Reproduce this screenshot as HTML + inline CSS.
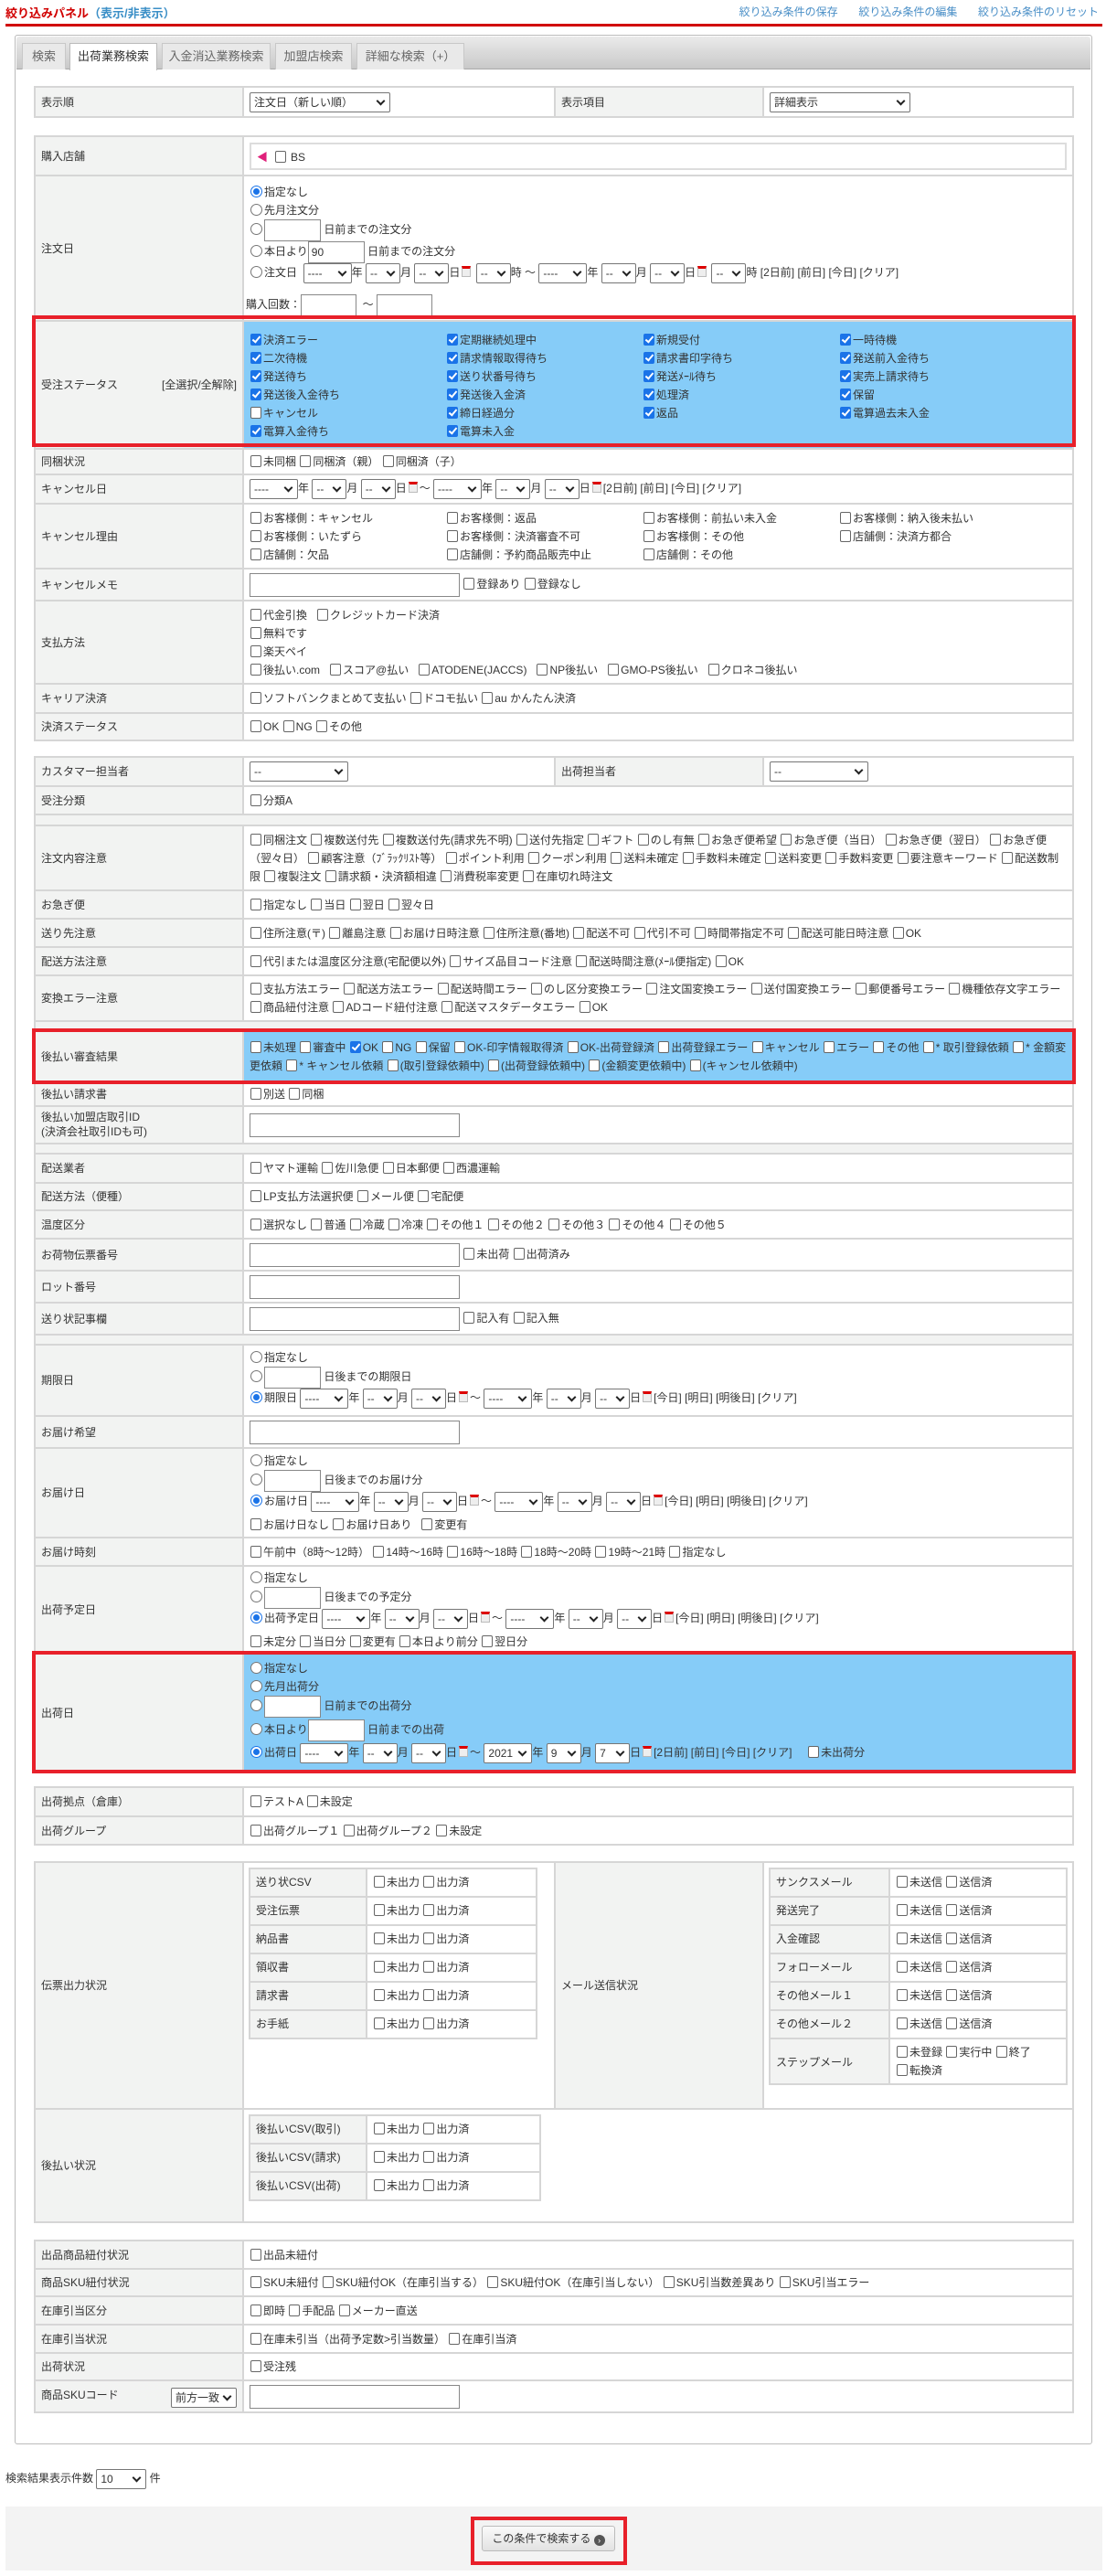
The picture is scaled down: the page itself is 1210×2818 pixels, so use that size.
<!DOCTYPE html>
<html><head><meta charset="utf-8">
<style>
*{box-sizing:border-box}
body{margin:0;width:1210px;height:2818px;position:relative;background:#fff;font-family:"Liberation Sans","Noto Sans CJK JP",sans-serif;font-size:12px;color:#333;overflow:hidden}
.abs{position:absolute}
table{border-collapse:collapse;table-layout:fixed;position:absolute;left:37px;width:1138px}
td{border:2px solid #d6d6d6;padding:2px 6px;vertical-align:middle;line-height:20px}
td.l{background:#f2f3f2;width:228px}
td.b{background:#86ccf8}
tr.sp td{background:#f2f3f2;padding:0}
.cb{display:inline-block;width:12px;height:13px;border:1px solid #666;border-radius:2px;background:#fff;vertical-align:-2px;margin:0 2px 0 1px;position:relative}
.cb.c{background:#1a73e8;border-color:#1a73e8}
.cb.c:after{content:"";position:absolute;left:3px;top:0px;width:3px;height:7px;border:solid #fff;border-width:0 2px 2px 0;transform:rotate(40deg)}
.rd{display:inline-block;width:13px;height:13px;border:1px solid #777;border-radius:50%;background:#fff;vertical-align:-2px;margin:0 2px 0 1px;position:relative}
.rd.c{border:1px solid #1a73e8}
.rd.c:after{content:"";position:absolute;left:2px;top:2px;width:7px;height:7px;border-radius:50%;background:#1a73e8}
.s{display:inline-block;height:22px;border:1px solid #767676;border-radius:2px;background:#fff;vertical-align:middle;line-height:20px;padding-left:4px;position:relative;font-size:12px}
.s:after{content:"";position:absolute;right:6px;top:5px;width:5px;height:5px;border:solid #222;border-width:0 2px 2px 0;transform:rotate(45deg)}
.y{width:53px}.m{width:38px}
.in{display:inline-block;height:24px;border:1px solid #888;background:#fff;vertical-align:middle;line-height:22px;padding-left:3px}
.cal{display:inline-block;width:10px;height:12px;border:1px solid #bbb;border-top:3px solid #d00;background:#eee;vertical-align:-1px;margin:0 2px}
.ln{height:20px;white-space:nowrap}
.g4 span.i{display:inline-block;width:215px;height:20px}
.red{position:absolute;border:4px solid #e8202a;pointer-events:none}
.inner{position:static;width:100%;border-collapse:collapse}
.inner td{border:2px solid #d6d6d6;height:31px;vertical-align:top;padding-top:4px}
</style></head><body>

<div class="abs" style="left:6px;top:4px;font-size:13px;font-weight:bold;color:#d10000">絞り込みパネル<span style="color:#3b8fc7">（表示/非表示）</span></div>
<div class="abs" style="right:8px;top:4px;font-size:12px;color:#4a8fc7;word-spacing:8px">絞り込み条件の保存 &nbsp;絞り込み条件の編集 &nbsp;絞り込み条件のリセット</div>
<div class="abs" style="left:6px;top:26px;width:1200px;height:3px;background:#d10000"></div>

<div class="abs" style="left:16px;top:38px;width:1179px;height:2636px;border:1px solid #bbb;border-radius:3px"></div>
<div class="abs" style="left:18px;top:40px;width:1175px;height:36px;background:linear-gradient(#eaeaea,#c9c9c9);border-bottom:1px solid #aaa;border-radius:3px 3px 0 0"></div>
<div class="abs" style="left:24px;top:47px;width:48px;height:29px;background:#e9e9e9;border:1px solid #c8c8c8;border-bottom:0;text-align:center;line-height:28px;color:#666;font-size:13px">検索</div>
<div class="abs" style="left:76px;top:47px;width:96px;height:30px;background:#fff;border:1px solid #bbb;border-bottom:0;text-align:center;line-height:28px;font-size:13px">出荷業務検索</div>
<div class="abs" style="left:177px;top:47px;width:119px;height:29px;background:#e9e9e9;border:1px solid #c8c8c8;border-bottom:0;text-align:center;line-height:28px;color:#666;font-size:13px">入金消込業務検索</div>
<div class="abs" style="left:301px;top:47px;width:84px;height:29px;background:#e9e9e9;border:1px solid #c8c8c8;border-bottom:0;text-align:center;line-height:28px;color:#666;font-size:13px">加盟店検索</div>
<div class="abs" style="left:390px;top:47px;width:118px;height:29px;background:#e9e9e9;border:1px solid #c8c8c8;border-bottom:0;text-align:center;line-height:28px;color:#666;font-size:13px">詳細な検索（+）</div>

<!-- table1 -->
<table style="top:94px">
<tr style="height:33px"><td class="l" style="width:228px">表示順</td><td style="width:341px"><span class="s" style="width:154px">注文日（新しい順）</span></td><td class="l" style="width:228px">表示項目</td><td><span class="s" style="width:154px">詳細表示</span></td></tr>
</table>

<!-- table2 -->
<table style="top:148px">
<tr style="height:43px"><td class="l">購入店舗</td><td><div style="border:2px solid #ddd;height:30px;padding:4px 6px"><span style="color:#e0207a">◀</span> &nbsp;<span class="cb"></span> BS</div></td></tr>
<tr style="height:156px"><td class="l">注文日</td><td style="vertical-align:top;padding-top:7px">
<div class="ln"><span class="rd c"></span>指定なし</div>
<div class="ln"><span class="rd"></span>先月注文分</div>
<div class="ln" style="height:24px"><span class="rd"></span><span class="in" style="width:62px"></span> 日前までの注文分</div>
<div class="ln" style="height:24px"><span class="rd"></span>本日より<span class="in" style="width:62px">90</span> 日前までの注文分</div>
<div class="ln" style="height:24px"><span class="rd"></span>注文日 &nbsp;<span class="s y">----</span>年 <span class="s m">--</span>月 <span class="s m">--</span>日<span class="cal"></span> <span class="s m">--</span>時 ～ <span class="s y">----</span>年 <span class="s m">--</span>月 <span class="s m">--</span>日<span class="cal"></span> <span class="s m">--</span>時 [2日前] [前日] [今日] [クリア]</div>
<div style="height:26px;margin-top:10px;margin-left:-4px">購入回数：<span class="in" style="width:61px"></span> &nbsp;～ <span class="in" style="width:61px"></span></div>
</td></tr>
<tr style="height:140px"><td class="l">受注ステータス<span style="float:right">[全選択/全解除]</span></td><td class="b g4" style="padding-top:4px">
<div><span class="i"><span class="cb c"></span>決済エラー</span><span class="i"><span class="cb c"></span>定期継続処理中</span><span class="i"><span class="cb c"></span>新規受付</span><span class="i"><span class="cb c"></span>一時待機</span></div>
<div><span class="i"><span class="cb c"></span>二次待機</span><span class="i"><span class="cb c"></span>請求情報取得待ち</span><span class="i"><span class="cb c"></span>請求書印字待ち</span><span class="i"><span class="cb c"></span>発送前入金待ち</span></div>
<div><span class="i"><span class="cb c"></span>発送待ち</span><span class="i"><span class="cb c"></span>送り状番号待ち</span><span class="i"><span class="cb c"></span>発送ﾒｰﾙ待ち</span><span class="i"><span class="cb c"></span>実売上請求待ち</span></div>
<div><span class="i"><span class="cb c"></span>発送後入金待ち</span><span class="i"><span class="cb c"></span>発送後入金済</span><span class="i"><span class="cb c"></span>処理済</span><span class="i"><span class="cb c"></span>保留</span></div>
<div><span class="i"><span class="cb"></span>キャンセル</span><span class="i"><span class="cb c"></span>締日経過分</span><span class="i"><span class="cb c"></span>返品</span><span class="i"><span class="cb c"></span>電算過去未入金</span></div>
<div><span class="i"><span class="cb c"></span>電算入金待ち</span><span class="i"><span class="cb c"></span>電算未入金</span></div>
</td></tr>
<tr style="height:28px"><td class="l">同梱状況</td><td><span class="cb"></span>未同梱 <span class="cb"></span>同梱済（親） <span class="cb"></span>同梱済（子）</td></tr>
<tr style="height:32px"><td class="l">キャンセル日</td><td><span class="s y">----</span>年 <span class="s m">--</span>月 <span class="s m">--</span>日<span class="cal"></span>～ <span class="s y">----</span>年 <span class="s m">--</span>月 <span class="s m">--</span>日<span class="cal"></span>[2日前] [前日] [今日] [クリア]</td></tr>
<tr style="height:71px"><td class="l">キャンセル理由</td><td class="g4">
<div><span class="i"><span class="cb"></span>お客様側：キャンセル</span><span class="i"><span class="cb"></span>お客様側：返品</span><span class="i"><span class="cb"></span>お客様側：前払い未入金</span><span class="i"><span class="cb"></span>お客様側：納入後未払い</span></div>
<div><span class="i"><span class="cb"></span>お客様側：いたずら</span><span class="i"><span class="cb"></span>お客様側：決済審査不可</span><span class="i"><span class="cb"></span>お客様側：その他</span><span class="i"><span class="cb"></span>店舗側：決済方都合</span></div>
<div><span class="i"><span class="cb"></span>店舗側：欠品</span><span class="i"><span class="cb"></span>店舗側：予約商品販売中止</span><span class="i"><span class="cb"></span>店舗側：その他</span></div>
</td></tr>
<tr style="height:35px"><td class="l">キャンセルメモ</td><td><span class="in" style="width:230px;height:26px"></span> <span class="cb"></span>登録あり <span class="cb"></span>登録なし</td></tr>
<tr style="height:91px"><td class="l">支払方法</td><td>
<div><span class="cb"></span>代金引換 &nbsp; <span class="cb"></span>クレジットカード決済</div>
<div><span class="cb"></span>無料です</div>
<div><span class="cb"></span>楽天ペイ</div>
<div><span class="cb"></span>後払い.com &nbsp; <span class="cb"></span>スコア@払い &nbsp; <span class="cb"></span>ATODENE(JACCS) &nbsp; <span class="cb"></span>NP後払い &nbsp; <span class="cb"></span>GMO-PS後払い &nbsp; <span class="cb"></span>クロネコ後払い</div>
</td></tr>
<tr style="height:32px"><td class="l">キャリア決済</td><td><span class="cb"></span>ソフトバンクまとめて支払い <span class="cb"></span>ドコモ払い <span class="cb"></span>au かんたん決済</td></tr>
<tr style="height:30px"><td class="l">決済ステータス</td><td><span class="cb"></span>OK <span class="cb"></span>NG <span class="cb"></span>その他</td></tr>
</table>

<!-- table3 -->
<table style="top:827px">
<tr style="height:32px"><td class="l" style="width:228px">カスタマー担当者</td><td style="width:341px"><span class="s" style="width:108px">--</span></td><td class="l" style="width:228px">出荷担当者</td><td><span class="s" style="width:108px">--</span></td></tr>
<tr style="height:31px"><td class="l">受注分類</td><td colspan="3"><span class="cb"></span>分類A</td></tr>
<tr class="sp" style="height:12px"><td colspan="4"></td></tr>
<tr style="height:71px"><td class="l">注文内容注意</td><td colspan="3" style="line-height:20px;padding-right:4px"><span class="cb"></span>同梱注文 <span class="cb"></span>複数送付先 <span class="cb"></span>複数送付先(請求先不明) <span class="cb"></span>送付先指定 <span class="cb"></span>ギフト <span class="cb"></span>のし有無 <span class="cb"></span>お急ぎ便希望 <span class="cb"></span>お急ぎ便（当日） <span class="cb"></span>お急ぎ便（翌日） <span class="cb"></span>お急ぎ便（翌々日） <span class="cb"></span>顧客注意（ﾌﾞﾗｯｸﾘｽﾄ等） <span class="cb"></span>ポイント利用 <span class="cb"></span>クーポン利用 <span class="cb"></span>送料未確定 <span class="cb"></span>手数料未確定 <span class="cb"></span>送料変更 <span class="cb"></span>手数料変更 <span class="cb"></span>要注意キーワード <span class="cb"></span>配送数制限 <span class="cb"></span>複製注文 <span class="cb"></span>請求額・決済額相違 <span class="cb"></span>消費税率変更 <span class="cb"></span>在庫切れ時注文</td></tr>
<tr style="height:31px"><td class="l">お急ぎ便</td><td colspan="3"><span class="cb"></span>指定なし <span class="cb"></span>当日 <span class="cb"></span>翌日 <span class="cb"></span>翌々日</td></tr>
<tr style="height:31px"><td class="l">送り先注意</td><td colspan="3"><span class="cb"></span>住所注意(〒) <span class="cb"></span>離島注意 <span class="cb"></span>お届け日時注意 <span class="cb"></span>住所注意(番地) <span class="cb"></span>配送不可 <span class="cb"></span>代引不可 <span class="cb"></span>時間帯指定不可 <span class="cb"></span>配送可能日時注意 <span class="cb"></span>OK</td></tr>
<tr style="height:31px"><td class="l">配送方法注意</td><td colspan="3"><span class="cb"></span>代引または温度区分注意(宅配便以外) <span class="cb"></span>サイズ品目コード注意 <span class="cb"></span>配送時間注意(ﾒｰﾙ便指定) <span class="cb"></span>OK</td></tr>
<tr style="height:50px"><td class="l">変換エラー注意</td><td colspan="3" style="padding-right:4px"><span class="cb"></span>支払方法エラー <span class="cb"></span>配送方法エラー <span class="cb"></span>配送時間エラー <span class="cb"></span>のし区分変換エラー <span class="cb"></span>注文国変換エラー <span class="cb"></span>送付国変換エラー <span class="cb"></span>郵便番号エラー <span class="cb"></span>機種依存文字エラー <span class="cb"></span>商品紐付注意 <span class="cb"></span>ADコード紐付注意 <span class="cb"></span>配送マスタデータエラー <span class="cb"></span>OK</td></tr>
<tr class="sp" style="height:10px"><td colspan="4"></td></tr>
<tr style="height:57px"><td class="l">後払い審査結果</td><td colspan="3" class="b" style="padding-right:4px"><span class="cb"></span>未処理 <span class="cb"></span>審査中 <span class="cb c"></span>OK <span class="cb"></span>NG <span class="cb"></span>保留 <span class="cb"></span>OK-印字情報取得済 <span class="cb"></span>OK-出荷登録済 <span class="cb"></span>出荷登録エラー <span class="cb"></span>キャンセル <span class="cb"></span>エラー <span class="cb"></span>その他 <span class="cb"></span>* 取引登録依頼 <span class="cb"></span>* 金額変更依頼 <span class="cb"></span>* キャンセル依頼 <span class="cb"></span>(取引登録依頼中) <span class="cb"></span>(出荷登録依頼中) <span class="cb"></span>(金額変更依頼中) <span class="cb"></span>(キャンセル依頼中)</td></tr>
<tr style="height:26px"><td class="l">後払い請求書</td><td colspan="3"><span class="cb"></span>別送 <span class="cb"></span>同梱</td></tr>
<tr style="height:41px"><td class="l" style="line-height:16px;vertical-align:top;padding-top:3px">後払い加盟店取引ID<br>(決済会社取引IDも可)</td><td colspan="3"><span class="in" style="width:230px;height:26px"></span></td></tr>
<tr class="sp" style="height:11px"><td colspan="4"></td></tr>
<tr style="height:32px"><td class="l">配送業者</td><td colspan="3"><span class="cb"></span>ヤマト運輸 <span class="cb"></span>佐川急便 <span class="cb"></span>日本郵便 <span class="cb"></span>西濃運輸</td></tr>
<tr style="height:30px"><td class="l">配送方法（便種）</td><td colspan="3"><span class="cb"></span>LP支払方法選択便 <span class="cb"></span>メール便 <span class="cb"></span>宅配便</td></tr>
<tr style="height:31px"><td class="l">温度区分</td><td colspan="3"><span class="cb"></span>選択なし <span class="cb"></span>普通 <span class="cb"></span>冷蔵 <span class="cb"></span>冷凍 <span class="cb"></span>その他１ <span class="cb"></span>その他２ <span class="cb"></span>その他３ <span class="cb"></span>その他４ <span class="cb"></span>その他５</td></tr>
<tr style="height:35px"><td class="l">お荷物伝票番号</td><td colspan="3"><span class="in" style="width:230px;height:26px"></span> <span class="cb"></span>未出荷 <span class="cb"></span>出荷済み</td></tr>
<tr style="height:35px"><td class="l">ロット番号</td><td colspan="3"><span class="in" style="width:230px;height:26px"></span></td></tr>
<tr style="height:35px"><td class="l">送り状記事欄</td><td colspan="3"><span class="in" style="width:230px;height:26px"></span> <span class="cb"></span>記入有 <span class="cb"></span>記入無</td></tr>
<tr class="sp" style="height:11px"><td colspan="4"></td></tr>
<tr style="height:78px"><td class="l">期限日</td><td colspan="3">
<div class="ln"><span class="rd"></span>指定なし</div>
<div class="ln" style="height:24px"><span class="rd"></span><span class="in" style="width:62px"></span> 日後までの期限日</div>
<div class="ln" style="height:26px"><span class="rd c"></span>期限日 <span class="s y">----</span>年 <span class="s m">--</span>月 <span class="s m">--</span>日<span class="cal"></span>～ <span class="s y">----</span>年 <span class="s m">--</span>月 <span class="s m">--</span>日<span class="cal"></span>[今日] [明日] [明後日] [クリア]</div>
</td></tr>
<tr style="height:35px"><td class="l">お届け希望</td><td colspan="3"><span class="in" style="width:230px;height:26px"></span></td></tr>
<tr style="height:98px"><td class="l">お届け日</td><td colspan="3">
<div class="ln"><span class="rd"></span>指定なし</div>
<div class="ln" style="height:24px"><span class="rd"></span><span class="in" style="width:62px"></span> 日後までのお届け分</div>
<div class="ln" style="height:26px"><span class="rd c"></span>お届け日 <span class="s y">----</span>年 <span class="s m">--</span>月 <span class="s m">--</span>日<span class="cal"></span>～ <span class="s y">----</span>年 <span class="s m">--</span>月 <span class="s m">--</span>日<span class="cal"></span>[今日] [明日] [明後日] [クリア]</div>
<div class="ln"><span class="cb"></span>お届け日なし <span class="cb"></span>お届け日あり &nbsp; <span class="cb"></span>変更有</div>
</td></tr>
<tr style="height:31px"><td class="l">お届け時刻</td><td colspan="3"><span class="cb"></span>午前中（8時～12時） <span class="cb"></span>14時～16時 <span class="cb"></span>16時～18時 <span class="cb"></span>18時～20時 <span class="cb"></span>19時～21時 <span class="cb"></span>指定なし</td></tr>
<tr style="height:95px"><td class="l">出荷予定日</td><td colspan="3">
<div class="ln"><span class="rd"></span>指定なし</div>
<div class="ln" style="height:24px"><span class="rd"></span><span class="in" style="width:62px"></span> 日後までの予定分</div>
<div class="ln" style="height:26px"><span class="rd c"></span>出荷予定日 <span class="s y">----</span>年 <span class="s m">--</span>月 <span class="s m">--</span>日<span class="cal"></span>～ <span class="s y">----</span>年 <span class="s m">--</span>月 <span class="s m">--</span>日<span class="cal"></span>[今日] [明日] [明後日] [クリア]</div>
<div class="ln"><span class="cb"></span>未定分 <span class="cb"></span>当日分 <span class="cb"></span>変更有 <span class="cb"></span>本日より前分 <span class="cb"></span>翌日分</div>
</td></tr>
<tr style="height:130px"><td class="l">出荷日</td><td colspan="3" class="b">
<div class="ln"><span class="rd"></span>指定なし</div>
<div class="ln"><span class="rd"></span>先月出荷分</div>
<div class="ln" style="height:26px"><span class="rd"></span><span class="in" style="width:62px"></span> 日前までの出荷分</div>
<div class="ln" style="height:26px"><span class="rd"></span>本日より<span class="in" style="width:62px"></span> 日前までの出荷</div>
<div class="ln" style="height:26px"><span class="rd c"></span>出荷日 <span class="s y">----</span>年 <span class="s m">--</span>月 <span class="s m">--</span>日<span class="cal"></span>～ <span class="s y">2021</span>年 <span class="s m">9</span>月 <span class="s m">7</span>日<span class="cal"></span>[2日前] [前日] [今日] [クリア] &nbsp; &nbsp; <span class="cb"></span>未出荷分</div>
</td></tr>
</table>

<!-- table4 -->
<table style="top:1954px">
<tr style="height:32px"><td class="l">出荷拠点（倉庫）</td><td><span class="cb"></span>テストA <span class="cb"></span>未設定</td></tr>
<tr style="height:31px"><td class="l">出荷グループ</td><td><span class="cb"></span>出荷グループ１ <span class="cb"></span>出荷グループ２ <span class="cb"></span>未設定</td></tr>
</table>

<!-- table5 -->
<table style="top:2036px">
<tr style="height:270px"><td class="l" style="width:228px">伝票出力状況</td>
<td style="width:341px;vertical-align:top;padding:5px 18px 0 5px"><table class="inner">
<tr><td class="l" style="width:128px">送り状CSV</td><td><span class="cb"></span>未出力 <span class="cb"></span>出力済</td></tr>
<tr><td class="l">受注伝票</td><td><span class="cb"></span>未出力 <span class="cb"></span>出力済</td></tr>
<tr><td class="l">納品書</td><td><span class="cb"></span>未出力 <span class="cb"></span>出力済</td></tr>
<tr><td class="l">領収書</td><td><span class="cb"></span>未出力 <span class="cb"></span>出力済</td></tr>
<tr><td class="l">請求書</td><td><span class="cb"></span>未出力 <span class="cb"></span>出力済</td></tr>
<tr><td class="l">お手紙</td><td><span class="cb"></span>未出力 <span class="cb"></span>出力済</td></tr>
</table></td>
<td class="l" style="width:228px">メール送信状況</td>
<td style="vertical-align:top;padding:5px 5px 0 5px"><table class="inner">
<tr><td class="l" style="width:131px">サンクスメール</td><td><span class="cb"></span>未送信 <span class="cb"></span>送信済</td></tr>
<tr><td class="l">発送完了</td><td><span class="cb"></span>未送信 <span class="cb"></span>送信済</td></tr>
<tr><td class="l">入金確認</td><td><span class="cb"></span>未送信 <span class="cb"></span>送信済</td></tr>
<tr><td class="l">フォローメール</td><td><span class="cb"></span>未送信 <span class="cb"></span>送信済</td></tr>
<tr><td class="l">その他メール１</td><td><span class="cb"></span>未送信 <span class="cb"></span>送信済</td></tr>
<tr><td class="l">その他メール２</td><td><span class="cb"></span>未送信 <span class="cb"></span>送信済</td></tr>
<tr><td class="l" style="vertical-align:middle;height:50px">ステップメール</td><td><span class="cb"></span>未登録 <span class="cb"></span>実行中 <span class="cb"></span>終了<br><span class="cb"></span>転換済</td></tr>
</table></td></tr>
<tr style="height:124px"><td class="l">後払い状況</td>
<td colspan="3" style="vertical-align:top;padding:5px 5px 0 5px"><table class="inner" style="width:320px">
<tr><td class="l" style="width:128px">後払いCSV(取引)</td><td><span class="cb"></span>未出力 <span class="cb"></span>出力済</td></tr>
<tr><td class="l">後払いCSV(請求)</td><td><span class="cb"></span>未出力 <span class="cb"></span>出力済</td></tr>
<tr><td class="l">後払いCSV(出荷)</td><td><span class="cb"></span>未出力 <span class="cb"></span>出力済</td></tr>
</table></td></tr>
</table>

<!-- table6 -->
<table style="top:2450px">
<tr style="height:31px"><td class="l">出品商品紐付状況</td><td><span class="cb"></span>出品未紐付</td></tr>
<tr style="height:30px"><td class="l">商品SKU紐付状況</td><td><span class="cb"></span>SKU未紐付 <span class="cb"></span>SKU紐付OK（在庫引当する） <span class="cb"></span>SKU紐付OK（在庫引当しない） <span class="cb"></span>SKU引当数差異あり <span class="cb"></span>SKU引当エラー</td></tr>
<tr style="height:31px"><td class="l">在庫引当区分</td><td><span class="cb"></span>即時 <span class="cb"></span>手配品 <span class="cb"></span>メーカー直送</td></tr>
<tr style="height:31px"><td class="l">在庫引当状況</td><td><span class="cb"></span>在庫未引当（出荷予定数&gt;引当数量） <span class="cb"></span>在庫引当済</td></tr>
<tr style="height:30px"><td class="l">出荷状況</td><td><span class="cb"></span>受注残</td></tr>
<tr style="height:35px"><td class="l">商品SKUコード<span class="s" style="width:72px;float:right;margin-top:2px">前方一致</span></td><td><span class="in" style="width:230px;height:26px"></span></td></tr>
</table>

<div class="abs" style="left:6px;top:2700px;line-height:22px">検索結果表示件数 <span class="s" style="width:55px">10</span> 件</div>
<div class="abs" style="left:6px;top:2742px;width:1200px;height:70px;background:#f3f3f3"></div>
<div class="abs" style="left:527px;top:2763px;width:146px;height:28px;border:1px solid #bbb;border-radius:3px;background:linear-gradient(#fafafa,#e2e2e2);text-align:center;line-height:26px;font-size:12px">この条件で検索する <span style="display:inline-block;width:12px;height:12px;border-radius:50%;background:#555;color:#fff;font-size:9px;line-height:12px;vertical-align:-1px">›</span></div>

<div class="red" style="left:35px;top:345px;width:1142px;height:144px"></div>
<div class="red" style="left:35px;top:1125px;width:1142px;height:61px"></div>
<div class="red" style="left:35px;top:1806px;width:1142px;height:134px"></div>
<div class="red" style="left:515px;top:2753px;width:171px;height:53px"></div>
</body></html>
